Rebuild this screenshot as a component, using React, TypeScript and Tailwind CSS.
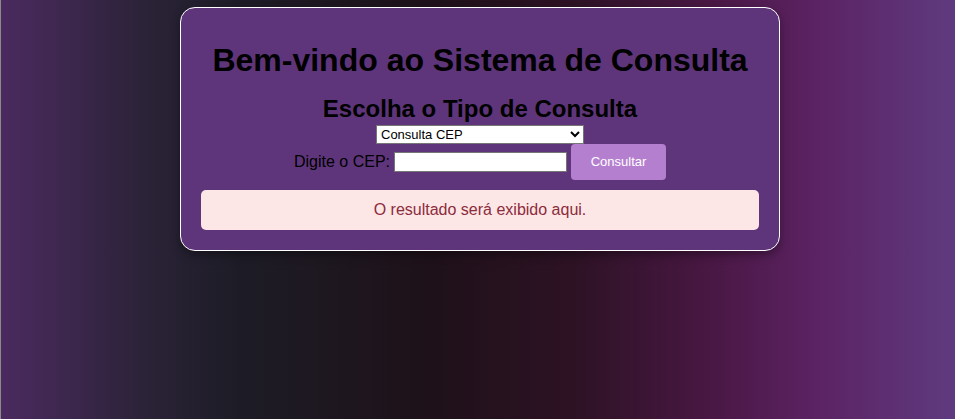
import React, { useState } from 'react';

const App: React.FC = () => {
  const [tipo, setTipo] = useState('cep');
  const [valor, setValor] = useState('');

  return (
    <div className="min-h-[419px] w-full border-l border-[#8a8a8a] bg-[linear-gradient(to_right,#4b2a5f_0%,#2b2338_15%,#1d1c26_25%,#1e1119_45%,#2d1224_60%,#4a1845_75%,#5b2262_85%,#5f3a7f_100%)] pt-[7px] pl-[4px] font-['Liberation_Sans',Arial,sans-serif]">
      {/* Card */}
      <div className="mx-auto w-[600px] rounded-[15px] border border-white bg-[#5e357a] p-5 text-center shadow-[0_4px_10px_rgba(0,0,0,0.35)]">
        <h1 className="mt-[14px] mb-[16px] text-[32px] leading-[37px] font-bold text-black">
          Bem-vindo ao Sistema de Consulta
        </h1>
        <h2 className="text-[24px] leading-[28px] font-bold text-black">
          Escolha o Tipo de Consulta
        </h2>
        <div className="mt-[2px] flex justify-center">
          <select
            value={tipo}
            onChange={(e) => setTipo(e.target.value)}
            className="h-[19px] w-[208px] border border-[#767676] bg-white text-[13px] text-black"
          >
            <option value="cep">Consulta CEP</option>
            <option value="cnpj">Consulta CNPJ</option>
          </select>
        </div>
        {/* Input row */}
        <div className="flex items-center justify-center gap-1 text-[16px] text-black">
          <label htmlFor="valor">Digite o CEP:</label>
          <input
            id="valor"
            value={valor}
            onChange={(e) => setValor(e.target.value)}
            className="h-[20px] w-[173px] border border-[#767676] bg-white px-1 text-[13px]"
          />
          <button className="h-[36px] w-[95px] rounded-[4px] bg-[#b57fd0] text-[13px] text-white">
            Consultar
          </button>
        </div>
        {/* Result */}
        <div className="mt-[10px] flex h-[40px] items-center justify-center rounded-[5px] bg-[#fde6e6] text-[16px] text-[#8b2c3c]">
          O resultado será exibido aqui.
        </div>
      </div>
    </div>
  );
};

export default App;
